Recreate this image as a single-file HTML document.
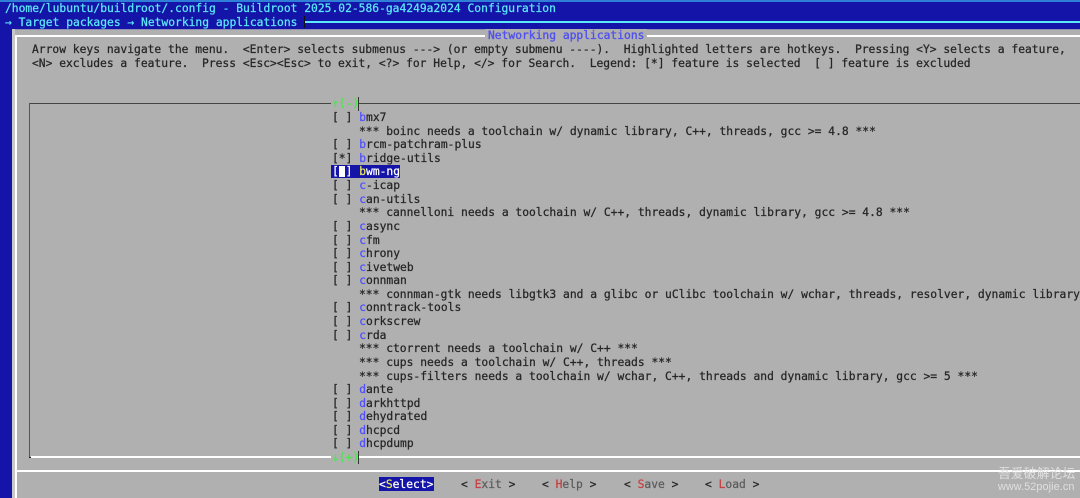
<!DOCTYPE html>
<html><head><meta charset="utf-8"><style>
html,body{margin:0;padding:0;background:#1414a8}
#p{position:relative;width:1080px;height:498px;overflow:hidden;background:#1414a8;font-family:"DejaVu Sans Mono","Liberation Mono",monospace;font-size:11.3px;filter:blur(.25px)}
.t{position:absolute;white-space:pre;line-height:14px;height:14px;color:#262626;margin-top:1px;-webkit-text-stroke:.25px currentColor}
.b{position:absolute}
.h{color:#5050ff}
.r{color:#c84040}
.d{color:#5c5c5c}
.g{color:#4ee84e;-webkit-text-stroke:.5px #4ee84e}
</style></head><body><div id="p">
<div class="b" style="left:0;top:0;width:1080px;height:2px;background:#2f7fd8"></div>
<div class="t" style="left:5px;top:1px;color:#5ce8f8">/home/lubuntu/buildroot/.config - Buildroot 2025.02-586-ga4249a2024 Configuration</div>
<div class="t" style="left:5px;top:15px;color:#5ce8f8">→ Target packages → Networking applications</div>
<div class="b" style="left:305px;top:21px;width:775px;height:2px;background:#5ce8f8"></div>
<div class="b" style="left:304px;top:16px;width:1px;height:12px;background:#111"></div>
<div class="b" style="left:12px;top:29px;width:1068px;height:469px;background:#b0b0b0"></div>
<div class="b" style="left:12px;top:29px;width:1068px;height:1px;background:#8f8fb8"></div>
<div class="b" style="left:12px;top:29px;width:3px;height:469px;background:#c8c8c8"></div>
<div class="b" style="left:15px;top:35px;width:1065px;height:2px;background:#fff"></div>
<div class="b" style="left:15px;top:35px;width:2px;height:463px;background:#fff"></div>
<div class="b" style="left:17px;top:470px;width:1063px;height:2px;background:#fff"></div>
<div class="t" style="left:485px;top:28px;background:#b0b0b0;padding:0 3px;color:#5050f0;-webkit-text-stroke:.35px #5050f0">Networking applications</div>
<div class="t" style="left:32px;top:42px">Arrow keys navigate the menu.  &lt;Enter&gt; selects submenus ---&gt; (or empty submenu ----).  Highlighted letters are hotkeys.  Pressing &lt;Y&gt; selects a feature,</div>
<div class="t" style="left:32px;top:56px">&lt;N&gt; excludes a feature.  Press &lt;Esc&gt;&lt;Esc&gt; to exit, &lt;?&gt; for Help, &lt;/&gt; for Search.  Legend: [*] feature is selected  [ ] feature is excluded</div>
<div class="b" style="left:29px;top:103px;width:1051px;height:1px;background:#444"></div>
<div class="b" style="left:29px;top:103px;width:1px;height:354px;background:#555"></div>
<div class="b" style="left:29px;top:457px;width:3px;height:1px;background:#222"></div>
<div class="b" style="left:31px;top:456px;width:1049px;height:2px;background:#fff"></div>
<div class="b" style="left:331px;top:97px;width:28px;height:14px;background:#b0b0b0"></div>
<div class="b" style="left:331px;top:450px;width:28px;height:14px;background:#b0b0b0"></div>
<div class="t g" style="left:332px;top:96px">↑(-)</div>
<div class="t g" style="left:332px;top:450px">↓(+)</div>
<div class="b" style="left:358px;top:97px;width:1px;height:14px;background:#333"></div>
<div class="b" style="left:358px;top:451px;width:1px;height:13px;background:#333"></div>

<div class="t" style="left:332px;top:110px">[ ] <span class="h">b</span>mx7</div>
<div class="t" style="left:359px;top:124px">*** boinc needs a toolchain w/ dynamic library, C++, threads, gcc &gt;= 4.8 ***</div>
<div class="t" style="left:332px;top:137px">[ ] <span class="h">b</span>rcm-patchram-plus</div>
<div class="t" style="left:332px;top:151px">[*] <span class="h">b</span>ridge-utils</div>
<div class="b" style="left:331px;top:165px;width:69px;height:13px;background:#1414a8"></div>
<div class="b" style="left:339px;top:166px;width:6px;height:11px;background:#fff"></div>
<div class="t" style="left:332px;top:164px;color:#fff">[ ] <span style="color:#e8e85c">b</span>wm-ng</div>
<div class="t" style="left:332px;top:178px">[ ] <span class="h">c</span>-icap</div>
<div class="t" style="left:332px;top:192px">[ ] <span class="h">c</span>an-utils</div>
<div class="t" style="left:359px;top:205px">*** cannelloni needs a toolchain w/ C++, threads, dynamic library, gcc &gt;= 4.8 ***</div>
<div class="t" style="left:332px;top:219px">[ ] <span class="h">c</span>async</div>
<div class="t" style="left:332px;top:233px">[ ] <span class="h">c</span>fm</div>
<div class="t" style="left:332px;top:246px">[ ] <span class="h">c</span>hrony</div>
<div class="t" style="left:332px;top:260px">[ ] <span class="h">c</span>ivetweb</div>
<div class="t" style="left:332px;top:273px">[ ] <span class="h">c</span>onnman</div>
<div class="t" style="left:359px;top:287px">*** connman-gtk needs libgtk3 and a glibc or uClibc toolchain w/ wchar, threads, resolver, dynamic library</div>
<div class="t" style="left:332px;top:300px">[ ] <span class="h">c</span>onntrack-tools</div>
<div class="t" style="left:332px;top:314px">[ ] <span class="h">c</span>orkscrew</div>
<div class="t" style="left:332px;top:328px">[ ] <span class="h">c</span>rda</div>
<div class="t" style="left:359px;top:341px">*** ctorrent needs a toolchain w/ C++ ***</div>
<div class="t" style="left:359px;top:355px">*** cups needs a toolchain w/ C++, threads ***</div>
<div class="t" style="left:359px;top:369px">*** cups-filters needs a toolchain w/ wchar, C++, threads and dynamic library, gcc &gt;= 5 ***</div>
<div class="t" style="left:332px;top:382px">[ ] <span class="h">d</span>ante</div>
<div class="t" style="left:332px;top:396px">[ ] <span class="h">d</span>arkhttpd</div>
<div class="t" style="left:332px;top:409px">[ ] <span class="h">d</span>ehydrated</div>
<div class="t" style="left:332px;top:423px">[ ] <span class="h">d</span>hcpcd</div>
<div class="t" style="left:332px;top:436px">[ ] <span class="h">d</span>hcpdump</div>

<div class="b" style="left:379px;top:477px;width:55px;height:14px;background:#1414a8"></div>
<div class="t" style="left:379px;top:477px;color:#fff">&lt;<span style="color:#e8e85c">S</span>elect&gt;</div>
<div class="t" style="left:461px;top:477px">&lt; <span class="r">E</span><span class="d">xit</span> &gt;</div>
<div class="t" style="left:542px;top:477px">&lt; <span class="r">H</span><span class="d">elp</span> &gt;</div>
<div class="t" style="left:624px;top:477px">&lt; <span class="r">S</span><span class="d">ave</span> &gt;</div>
<div class="t" style="left:705px;top:477px">&lt; <span class="r">L</span><span class="d">oad</span> &gt;</div>

<div class="t" style="left:998px;top:464px;height:16px;line-height:16px;font-family:'Noto Sans CJK SC','WenQuanYi Zen Hei',sans-serif;font-size:12.8px;color:#e0e0e0;letter-spacing:.1px;-webkit-text-stroke:0">吾爱破解论坛</div>
<div class="t" style="left:998px;top:479px;font-family:'Liberation Sans',sans-serif;font-size:10.8px;color:#e0e0e0;letter-spacing:.1px;-webkit-text-stroke:0">www.52pojie.cn</div>
</div></body></html>
